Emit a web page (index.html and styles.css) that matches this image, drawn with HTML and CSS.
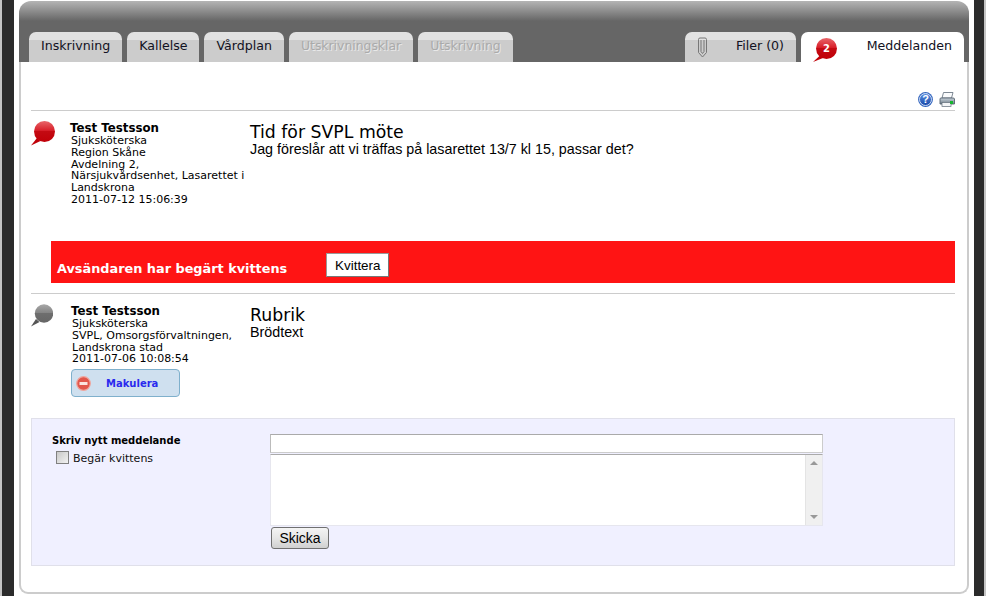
FILE: index.html

```html
<!DOCTYPE html>
<html lang="sv">
<head>
  <meta charset="UTF-8" />
  <title>Meddelanden</title>
  <link rel="stylesheet" href="styles.css">
</head>
<body>
  <svg class="defs" width="0" height="0">
    <defs>
      <linearGradient id="redTop" x1="0" y1="0" x2="0" y2="1">
        <stop offset="0" stop-color="#e8666a"/>
        <stop offset="0.45" stop-color="#d8202a"/>
        <stop offset="0.5" stop-color="#c40a12"/>
        <stop offset="1" stop-color="#c00008"/>
      </linearGradient>
      <linearGradient id="grayTop" x1="0" y1="0" x2="0" y2="1">
        <stop offset="0" stop-color="#a8a8a8"/>
        <stop offset="0.45" stop-color="#858585"/>
        <stop offset="0.5" stop-color="#6e6e6e"/>
        <stop offset="1" stop-color="#666"/>
      </linearGradient>
      <linearGradient id="helpBlue" x1="0" y1="0" x2="0" y2="1">
        <stop offset="0" stop-color="#5b8fe0"/>
        <stop offset="1" stop-color="#1646a8"/>
      </linearGradient>
      <linearGradient id="printBody" x1="0" y1="0" x2="0" y2="1">
        <stop offset="0" stop-color="#c8d2da"/>
        <stop offset="1" stop-color="#6f7d8a"/>
      </linearGradient>
    </defs>
  </svg>

  <div class="frame">
    <div class="panel">
      <div class="panel-head">
        <div class="tabs">
          <a class="tab">Inskrivning</a>
          <a class="tab">Kallelse</a>
          <a class="tab">Vårdplan</a>
          <a class="tab disabled">Utskrivningsklar</a>
          <a class="tab disabled">Utskrivning</a>
          <a class="tab tab-files">
            <svg width="11" height="21" viewBox="0 0 11 21" fill="none" stroke="#777" stroke-width="1">
              <path d="M1.5 2.5 A1.5 1.5 0 0 1 3 1 H8 A1.5 1.5 0 0 1 9.5 2.5 V15.5 L5.5 20 L1.5 15.5 Z"/>
              <path d="M4 3 V14.5 L5.5 16.5 L7 14.5 V3"/>
            </svg>
            <span>Filer (0)</span>
          </a>
          <a class="tab tab-messages">
            <span class="tab-pin">
              <svg width="24" height="25" viewBox="0 0 24 25">
                <path d="M0 24 L7 17.5 L10 20 Z" fill="#c00008"/>
                <circle cx="13.5" cy="10.5" r="10.5" fill="url(#redTop)"/>
              </svg>
              <b>2</b>
            </span>
            <span>Meddelanden</span>
          </a>
        </div>
      </div>

      <div class="panel-body">
        <div class="toolbar">
          <svg width="15" height="15" viewBox="0 0 15 15">
            <circle cx="7.5" cy="7.5" r="7.4" fill="#2f62bd"/>
            <circle cx="7.5" cy="7.5" r="6" fill="url(#helpBlue)" stroke="#dfe9f8" stroke-width="0.9"/>
            <text x="7.5" y="11.3" class="help-mark">?</text>
          </svg>
          <svg width="16" height="15" viewBox="0 0 16 15">
            <path d="M4.5 0.5 H14 L12.5 6 H3 Z" fill="#fafbfc" stroke="#6f7c88" stroke-width="0.9"/>
            <path d="M1 7 Q1 6 2 6 H14 Q15.5 6 15.5 7 V12 H1 Z" fill="url(#printBody)" stroke="#56636f" stroke-width="0.9"/>
            <rect x="3" y="10.5" width="9" height="4" fill="#f2f4f6" stroke="#5f6c78" stroke-width="0.7"/>
            <rect x="11" y="9" width="3" height="3" fill="#16b52f"/>
          </svg>
        </div>

        <div class="message first">
          <div class="message-row">
            <svg class="pin" width="24" height="26" viewBox="0 0 24 26">
              <path d="M0 25.5 L6 18 L9.5 21 Z" fill="#c00008"/>
              <circle cx="13.5" cy="11.5" r="10.5" fill="url(#redTop)"/>
            </svg>
            <div class="sender">
              <div class="sender-name">Test Testsson</div>
              <div class="sender-info">Sjuksköterska<br>Region Skåne<br>Avdelning 2,<br>Närsjukvårdsenhet, Lasarettet i<br>Landskrona<br>2011-07-12 15:06:39</div>
            </div>
            <div class="content">
              <h2>Tid för SVPL möte</h2>
              <p>Jag föreslår att vi träffas på lasarettet 13/7 kl 15, passar det?</p>
            </div>
          </div>
          <div class="receipt">
            <span>Avsändaren har begärt kvittens</span>
            <button class="receipt-btn">Kvittera</button>
          </div>
        </div>

        <div class="message second">
          <div class="message-row">
            <svg class="pin" width="22" height="23" viewBox="0 0 22 23">
              <path d="M0 22.5 L5 15 L8.5 18 Z" fill="#555"/>
              <circle cx="13" cy="9.5" r="9.2" fill="url(#grayTop)"/>
            </svg>
            <div class="sender">
              <div class="sender-name">Test Testsson</div>
              <div class="sender-info">Sjuksköterska<br>SVPL, Omsorgsförvaltningen,<br>Landskrona stad<br>2011-07-06 10:08:54</div>
              <a class="cancel-btn">
                <svg width="15" height="15" viewBox="0 0 15 15">
                  <circle cx="7.5" cy="7.5" r="6.8" fill="#e2574c" stroke="#f0a59c" stroke-width="1.2"/>
                  <rect x="3.5" y="6" width="8" height="3" fill="#fbe4e0"/>
                </svg>
                <span>Makulera</span>
              </a>
            </div>
            <div class="content">
              <h2>Rubrik</h2>
              <p>Brödtext</p>
            </div>
          </div>
        </div>

        <form class="new-message">
          <div class="new-left">
            <div class="new-title">Skriv nytt meddelande</div>
            <label class="new-check"><input type="checkbox"> <span>Begär kvittens</span></label>
          </div>
          <div class="new-fields">
            <input class="subject" type="text">
            <div class="body-box">
              <textarea></textarea>
              <div class="scroll"><i class="up"></i><i class="down"></i></div>
            </div>
            <button type="button" class="send-btn">Skicka</button>
          </div>
        </form>
      </div>
    </div>
  </div>
</body>
</html>
```

FILE: styles.css

```css
html, body {
  margin: 0;
  padding: 0;
  height: 596px;
  overflow: hidden;
  background: #fff;
}
body {
  font-family: "DejaVu Sans", Verdana, sans-serif;
  color: #000;
  border-left: 2px solid #c4c4c4;
  border-right: 2px solid #c4c4c4;
  box-sizing: border-box;
}
.defs {
  position: absolute;
}
.frame {
  height: 596px;
  box-sizing: border-box;
  border-left: 12px solid #2b2b2b;
  border-right: 10px solid #2b2b2b;
  padding: 1px 5px 0;
}
.panel {
  width: 950px;
}
.panel-head {
  height: 61px;
  box-sizing: border-box;
  padding: 31px 5px 0 10px;
  border-radius: 12px 12px 0 0;
  background: linear-gradient(#b4b4b4 0, #666 20px);
}
.tabs {
  display: flex;
  gap: 5px;
  height: 30px;
}
.tab {
  box-sizing: border-box;
  padding: 6px 12px 0;
  font-size: 12.6px;
  line-height: 15px;
  color: #111122;
  border-radius: 7px 7px 0 0;
  background: linear-gradient(#e2e2e2 0, #e2e2e2 8px, #ccc 8px);
}
.tab.disabled {
  font-size: 12.4px;
  color: #aaa;
  text-shadow: 1px 1px 0 #e8e8e8;
}
.tab-files {
  margin-left: auto;
  width: 111px;
  display: flex;
  justify-content: space-between;
  padding: 5px 12px 0 12px;
}
.tab-files span {
  padding-top: 1px;
}
.tab-messages {
  width: 163px;
  display: flex;
  justify-content: space-between;
  background: #fff;
  padding: 6px 12px 0 12px;
}
.tab-pin {
  position: relative;
  display: block;
  height: 25px;
}
.tab-pin svg {
  display: block;
}
.tab-pin b {
  position: absolute;
  left: 10px;
  top: 3px;
  font-size: 10px;
  color: #fff;
}

.panel-body {
  height: 532px;
  box-sizing: border-box;
  padding: 0 12px 0 10px;
  border: 2px solid #ccc;
  border-top: none;
  border-radius: 0 0 9px 9px;
}
.toolbar {
  height: 49px;
  box-sizing: border-box;
  display: flex;
  justify-content: flex-end;
  align-items: flex-end;
  gap: 6px;
  padding-bottom: 3px;
  border-bottom: 1px solid #ccc;
}
.help-mark {
  font-family: "Liberation Sans", sans-serif;
  font-size: 11px;
  font-weight: bold;
  fill: #fff;
  text-anchor: middle;
}

.message {
  border-bottom: 1px solid #ccc;
}
.message.first {
  height: 183px;
  box-sizing: border-box;
}
.message.second {
  height: 124px;
  border-bottom: none;
}
.message-row {
  display: grid;
  grid-template-columns: 39px 180px 1fr;
  padding-top: 9px;
}
.message.first .message-row {
  height: 130px;
  box-sizing: border-box;
}
.pin {
  display: block;
}
.sender {
  padding-top: 2px;
}
.sender-name {
  font-size: 11.8px;
  font-weight: bold;
  line-height: 13px;
}
.sender-info {
  font-size: 11px;
  line-height: 11.8px;
  margin-left: 1px;
}
.content h2 {
  margin: 4px 0 0;
  font-size: 17.3px;
  font-weight: normal;
  line-height: 17px;
}
.content p {
  margin: 0;
  font-family: "Liberation Sans", sans-serif;
  font-size: 14.3px;
  line-height: 16px;
}
.receipt {
  height: 42px;
  margin-left: 20px;
  box-sizing: border-box;
  background: #ff1414;
  color: #fff;
  font-size: 12.85px;
  font-weight: bold;
  display: flex;
  align-items: flex-end;
  padding: 0 0 6px 6px;
}
.receipt span {
  line-height: 16px;
}
.receipt-btn {
  width: 63px;
  height: 24px;
  margin: 0 0 0 39px;
  padding: 0;
  box-sizing: border-box;
  background: #fff;
  border: 1px solid #999;
  border-right-color: #777;
  border-bottom-color: #777;
  font-family: "Liberation Sans", sans-serif;
  font-size: 13.4px;
  color: #000;
}
.message.second .message-row {
  padding-top: 10px;
}
.message.second .sender {
  padding-top: 1px;
  margin-left: 1px;
}
.message.second h2 {
  margin-top: 2px;
  line-height: 18px;
}
.cancel-btn {
  display: flex;
  align-items: center;
  width: 109px;
  height: 28px;
  margin-top: 4px;
  box-sizing: border-box;
  padding-left: 4px;
  gap: 15px;
  background: #cfe0ef;
  border: 1px solid #7fb0cc;
  border-radius: 4px;
  color: #2a2aee;
  font-size: 10px;
  font-weight: bold;
}

.new-message {
  height: 148px;
  box-sizing: border-box;
  display: flex;
  background: #f0f0ff;
  border: 1px solid #e0e0ea;
}
.new-left {
  width: 238px;
  box-sizing: border-box;
  padding: 15px 0 0 20px;
}
.new-title {
  font-size: 10px;
  font-weight: bold;
  line-height: 13px;
}
.new-check {
  display: flex;
  align-items: flex-start;
  gap: 4px;
  margin: 4px 0 0 4px;
  font-size: 11px;
  line-height: 13px;
  color: #111;
}
.new-check span {
  padding-top: 1px;
}
.new-check input {
  appearance: none;
  width: 13px;
  height: 13px;
  margin: 0;
  box-sizing: border-box;
  border: 1px solid #808080;
  background: linear-gradient(135deg, #c8c8c8, #f2f2f2);
}
.new-fields {
  width: 553px;
  padding-top: 15px;
}
.subject {
  display: block;
  width: 100%;
  height: 19px;
  box-sizing: border-box;
  margin: 0 0 1px;
  border: 1px solid #ccc;
  border-top-color: #aaa;
  border-left-color: #bbb;
  background: #fff;
}
.body-box {
  display: flex;
  height: 72px;
  box-sizing: border-box;
  background: #fff;
  border: 1px solid #e6e6ee;
  border-top-color: #aaa;
}
.body-box textarea {
  flex: 1;
  border: none;
  padding: 0;
  resize: none;
  outline: none;
  background: #fff;
}
.scroll {
  position: relative;
  width: 16px;
  background: #f0f0f0;
  border-left: 1px solid #e4e4e4;
}
.scroll i {
  position: absolute;
  left: 4px;
  border-left: 4px solid transparent;
  border-right: 4px solid transparent;
}
.scroll .up {
  top: 6px;
  border-bottom: 4px solid #999;
}
.scroll .down {
  bottom: 6px;
  border-top: 4px solid #999;
}
.send-btn {
  display: block;
  width: 58px;
  height: 22px;
  margin: 1px 0 0 1px;
  padding: 0;
  box-sizing: border-box;
  border: 1px solid #707070;
  border-radius: 3px;
  background: linear-gradient(#f4f4f4, #e6e6e6 50%, #d0d0d0);
  font-family: "Liberation Sans", sans-serif;
  font-size: 14px;
  color: #000;
}
```
